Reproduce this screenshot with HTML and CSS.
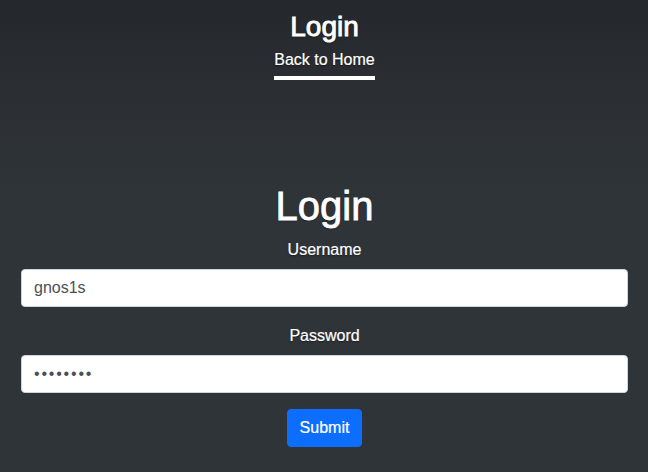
FILE: index.html
```html
<!DOCTYPE html>
<html lang="en">
<head>
<meta charset="utf-8">
<title>Login</title>
<link rel="stylesheet" href="styles.css">
</head>
<body>
<div class="cover">
  <header class="masthead">
    <h3 class="brand">Login</h3>
    <nav class="nav">
      <a class="nav-link active" href="#">Back to Home</a>
    </nav>
  </header>
  <main class="main">
    <h1 class="title">Login</h1>
    <form class="form">
      <div class="field">
        <label class="label" for="username">Username</label>
        <input class="input" id="username" type="text" value="gnos1s">
      </div>
      <div class="field field-last">
        <label class="label" for="password">Password</label>
        <input class="input input-password" id="password" type="password" value="12345678">
      </div>
      <button class="btn" type="button">Submit</button>
    </form>
  </main>
</div>
</body>
</html>
```

FILE: styles.css
```css
html, body {
  margin: 0;
  padding: 0;
  height: 100%;
}
body {
  background: linear-gradient(to bottom, #24272b 0px, #2b2f33 90px, #2f3439 200px, #2f3439 100%);
  color: #fff;
  font-family: "Liberation Sans", Arial, sans-serif;
  font-size: 16px;
  line-height: 1.5;
  text-shadow: 0 0.05rem 0.1rem rgba(0, 0, 0, 0.5);
  -webkit-text-stroke: 0.2px #fff;
}
.cover {
  display: flex;
  flex-direction: column;
  align-items: stretch;
  min-height: 100%;
  box-sizing: border-box;
  padding: 10px 20px 0 21px;
}
.masthead {
  display: flex;
  flex-direction: column;
  align-items: center;
}
.brand {
  margin: 0;
  font-size: 28px;
  font-weight: 400;
  line-height: 1.2;
  -webkit-text-stroke: 0.9px #fff;
}
.nav {
  display: flex;
  justify-content: center;
  margin-top: 0;
}
.nav-link {
  display: block;
  padding: 4px 0;
  color: #fff;
  text-decoration: none;
  border-bottom: 4px solid #fff;
  font-weight: 400;
}
.main {
  margin-top: 102px;
  display: flex;
  flex-direction: column;
}
.title {
  margin: 0 0 8px;
  text-align: center;
  font-size: 40px;
  font-weight: 400;
  line-height: 1.2;
  -webkit-text-stroke: 0.8px #fff;
}
.form {
  display: flex;
  flex-direction: column;
  align-items: center;
}
.field {
  display: flex;
  flex-direction: column;
  align-items: center;
  align-self: stretch;
  margin-bottom: 17px;
}
.field-last {
  margin-bottom: 16px;
}
.label {
  margin-bottom: 7px;
  line-height: 24px;
}
.input {
  align-self: stretch;
  box-sizing: border-box;
  height: 38px;
  padding: 6px 12px;
  font-family: "Liberation Sans", Arial, sans-serif;
  font-size: 16px;
  line-height: 24px;
  color: #495057;
  background: #fff;
  border: 1px solid #ced4da;
  border-radius: 4px;
  text-shadow: none;
  -webkit-text-stroke: 0;
  outline: none;
}
.input-password {
  letter-spacing: 1.8px;
}
.btn {
  box-sizing: border-box;
  height: 38px;
  padding: 6px 12px;
  font-family: "Liberation Sans", Arial, sans-serif;
  font-size: 16px;
  line-height: 24px;
  color: #fff;
  background: #0d6efd;
  border: 1px solid #0d6efd;
  border-radius: 4px;
  text-shadow: none;
  -webkit-text-stroke: 0.2px #fff;
  cursor: pointer;
}
```
